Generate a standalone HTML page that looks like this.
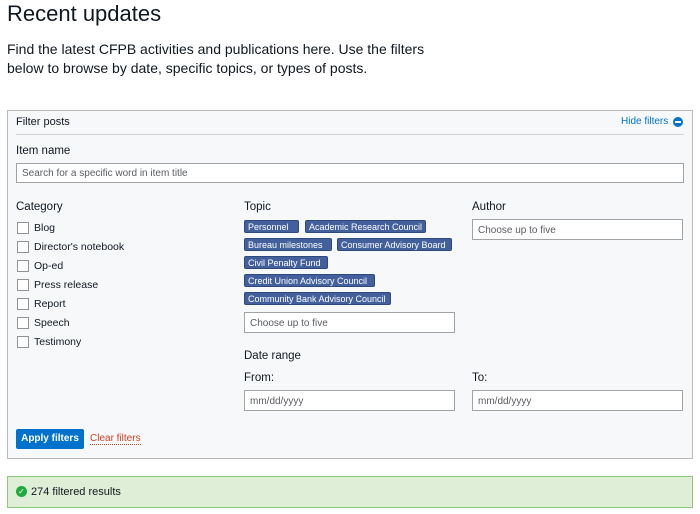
<!DOCTYPE html>
<html><head><style>
*{box-sizing:border-box;margin:0;padding:0}
body{width:700px;height:514px;background:#fff;font-family:"Liberation Sans",sans-serif;color:#101820;position:relative;overflow:hidden}
.a{position:absolute}
h1{position:absolute;left:7px;top:1px;font-size:22px;font-weight:normal}
.p{left:7px;top:40px;font-size:14px;line-height:19px;width:420px}
.box{left:7px;top:110px;width:686px;height:349px;background:#f7f8f9;border:1px solid #babbbd}
.lbl{font-size:11.5px}
.inp{background:#fff;border:1px solid #a2a3a4;font-size:10px;color:#5a5d61;padding-left:5px}
.cb{width:12px;height:12px;border:1px solid #919395;background:#fff;left:17px}
.cbl{left:34px;font-size:10.5px}
.tag{background:#43609c;color:#fff;font-size:9px;height:13px;line-height:12px;padding:0 3px;border-radius:2px;border:1px solid #2c4a7c;white-space:nowrap;overflow:hidden}
</style></head><body>
<h1>Recent updates</h1>
<div class="a p">Find the latest CFPB activities and publications here. Use the filters below to browse by date, specific topics, or types of posts.</div>
<div class="a box"></div>
<div class="a lbl" style="left:16px;top:116px;font-size:11px">Filter posts</div>
<div class="a" style="left:621px;top:116px;font-size:10px;color:#0072ce">Hide filters</div>
<div class="a" style="left:673px;top:117px;width:10px;height:10px;border-radius:50%;background:#0072ce"><div class="a" style="left:2px;top:4px;width:6px;height:2px;background:#fff"></div></div>
<div class="a" style="left:16px;top:134px;width:668px;height:1px;background:#d2d3d5"></div>
<div class="a lbl" style="left:16px;top:145px">Item name</div>
<div class="a inp" style="left:16px;top:163px;width:668px;height:20px;line-height:20px">Search for a specific word in item title</div>
<div class="a lbl" style="left:16px;top:201px">Category</div>
<div class="a cb" style="top:222px"></div><div class="a cbl" style="top:222px">Blog</div>
<div class="a cb" style="top:241px"></div><div class="a cbl" style="top:241px">Director's notebook</div>
<div class="a cb" style="top:260px"></div><div class="a cbl" style="top:260px">Op-ed</div>
<div class="a cb" style="top:279px"></div><div class="a cbl" style="top:279px">Press release</div>
<div class="a cb" style="top:298px"></div><div class="a cbl" style="top:298px">Report</div>
<div class="a cb" style="top:317px"></div><div class="a cbl" style="top:317px">Speech</div>
<div class="a cb" style="top:336px"></div><div class="a cbl" style="top:336px">Testimony</div>
<div class="a lbl" style="left:244px;top:201px">Topic</div>
<div class="a tag" style="left:244px;top:220px;width:55px">Personnel</div>
<div class="a tag" style="left:305px;top:220px;width:121px">Academic Research Council</div>
<div class="a tag" style="left:244px;top:238px;width:88px">Bureau milestones</div>
<div class="a tag" style="left:337px;top:238px;width:115px">Consumer Advisory Board</div>
<div class="a tag" style="left:244px;top:256px;width:84px">Civil Penalty Fund</div>
<div class="a tag" style="left:244px;top:274px;width:131px">Credit Union Advisory Council</div>
<div class="a tag" style="left:244px;top:292px;width:147px">Community Bank Advisory Council</div>
<div class="a inp" style="left:244px;top:312px;width:211px;height:21px;line-height:21px">Choose up to five</div>
<div class="a lbl" style="left:472px;top:201px">Author</div>
<div class="a inp" style="left:472px;top:219px;width:211px;height:21px;line-height:21px">Choose up to five</div>
<div class="a lbl" style="left:244px;top:350px">Date range</div>
<div class="a lbl" style="left:244px;top:372px">From:</div>
<div class="a lbl" style="left:472px;top:372px">To:</div>
<div class="a inp" style="left:244px;top:390px;width:211px;height:21px;line-height:21px">mm/dd/yyyy</div>
<div class="a inp" style="left:472px;top:390px;width:211px;height:21px;line-height:21px">mm/dd/yyyy</div>
<div class="a" style="left:16px;top:429px;width:68px;height:20px;background:#0072ce;border-radius:2px;color:#fff;font-size:10px;font-weight:bold;text-align:center;line-height:20px">Apply filters</div>
<div class="a" style="left:90px;top:433px;font-size:10px;color:#d14124;border-bottom:1px dotted #d14124">Clear filters</div>
<div class="a" style="left:7px;top:476px;width:686px;height:32px;background:#dfeed6;border:1px solid #8fc77f"></div>
<div class="a" style="left:16px;top:486px;width:11px;height:11px;border-radius:50%;background:#20aa3f;color:#fff;font-size:8px;text-align:center;line-height:11px">✓</div>
<div class="a" style="left:31px;top:486px;font-size:11px">274 filtered results</div>
</body></html>
